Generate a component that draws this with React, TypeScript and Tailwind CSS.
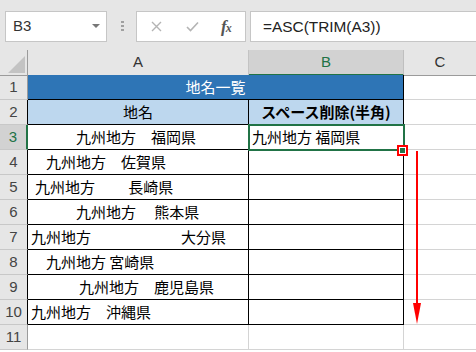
import React from 'react';

const JP = "font-['Noto_Sans_CJK_JP',sans-serif]";
const UI = "font-['Liberation_Sans',Arial,sans-serif]";

const dataRows = [
  { text: '九州地方　福岡県', pad: 'pl-[48px]' },
  { text: '九州地方　佐賀県', pad: 'pl-[18px]' },
  { text: '九州地方　　 長崎県', pad: 'pl-[7px]' },
  { text: '九州地方　 熊本県', pad: 'pl-[48px]' },
  { text: '九州地方　　　　　　大分県', pad: 'pl-[3px]' },
  { text: '九州地方 宮崎県', pad: 'pl-[18px]' },
  { text: '九州地方　鹿児島県', pad: 'pl-[51px]' },
  { text: '九州地方　沖縄県', pad: 'pl-[3px]' },
];

const RowHead: React.FC<{ n: number; edge: string; active?: boolean }> = ({ n, edge, active }) => (
  <div
    className={`h-[25px] flex items-center justify-center border-b border-b-[#c8c8c8] ${edge} ${UI} text-[15px] ${
      active ? 'bg-[#d2d2d2] text-[#217346]' : 'bg-[#e6e6e6] text-[#444]'
    }`}
  >
    {n}
  </div>
);

const Toolbar: React.FC = () => (
  <div className="h-[50px] bg-[#e6e6e6] flex items-start pt-[11px]">
    <div className={`ml-[5px] w-[102px] h-[31px] bg-white border border-[#c6c6c6] flex items-center justify-between pl-[7px] pr-[6px] ${UI} text-[15px] text-[#333]`}>
      <span>B3</span>
      <svg width="8" height="5" viewBox="0 0 8 5">
        <polygon points="0,0 8,0 4,4" fill="#777" />
      </svg>
    </div>
    <div className="ml-[14px] mt-[10px] flex flex-col gap-[2px]">
      <span className="w-[3px] h-[2px] bg-[#a0a0a0]" />
      <span className="w-[3px] h-[2px] bg-[#a0a0a0]" />
      <span className="w-[3px] h-[2px] bg-[#a0a0a0]" />
    </div>
    <div className="ml-[12px] w-[110px] h-[31px] bg-white border border-[#c6c6c6] flex items-center">
      <svg className="ml-[14px]" width="11" height="11" viewBox="0 0 11 11">
        <path d="M1 1 L10 10 M10 1 L1 10" stroke="#b4b4b4" strokeWidth="1.4" />
      </svg>
      <svg className="ml-[24px]" width="13" height="11" viewBox="0 0 13 11">
        <path d="M1 6 L4.5 9.5 L12 1.5" stroke="#b4b4b4" strokeWidth="1.6" fill="none" />
      </svg>
      <span className="ml-[22px] font-['Liberation_Serif',serif] italic font-bold text-[17px] leading-none text-[#555] tracking-[-1px]">
        f<span className="text-[12px]">x</span>
      </span>
    </div>
    <div className={`ml-[4px] flex-1 h-[31px] bg-white border border-r-0 border-[#c6c6c6] flex items-center pl-[12px] ${UI} text-[15.4px] text-[#222]`}>
      =ASC(TRIM(A3))
    </div>
  </div>
);

export default function App() {
  return (
    <div className="w-[476px] h-[352px] bg-white overflow-hidden">
      <Toolbar />
      <div className="relative grid grid-cols-[28px_221px_155px_72px] auto-rows-[25px]">
        {/* column headers */}
        <div className="h-[26px] bg-[#e6e6e6] border-r border-b border-[#9b9b9b] relative">
          <svg className="absolute right-[2px] bottom-[2px]" width="17" height="17" viewBox="0 0 17 17">
            <polygon points="17,0 17,17 0,17" fill="#c3c3c3" />
          </svg>
        </div>
        <div className={`h-[26px] bg-[#e6e6e6] border-r border-r-[#c3c3c3] border-b border-b-[#9b9b9b] flex items-center justify-center ${UI} text-[15px] text-[#333]`}>
          A
        </div>
        <div className={`h-[26px] bg-[#d2d2d2] border-r border-r-[#bfbfbf] border-b-2 border-b-[#217346] flex items-center justify-center ${UI} text-[15px] text-[#217346]`}>
          B
        </div>
        <div className={`h-[26px] bg-[#e6e6e6] border-b border-b-[#9b9b9b] flex items-center justify-center ${UI} text-[15px] text-[#333]`}>
          C
        </div>

        {/* row 1 */}
        <RowHead n={1} edge="border-r border-r-[#9b9b9b]" />
        <div className={`col-span-2 bg-[#2e75b6] border-r border-b border-black flex items-center justify-center ${JP} text-[15px] text-white`}>
          地名一覧
        </div>
        <div className="border-b border-[#d4d4d4]" />

        {/* row 2 */}
        <RowHead n={2} edge="border-r border-r-black" />
        <div className={`bg-[#bdd7ee] border-r border-b border-black flex items-center justify-center ${JP} text-[15px] text-black`}>
          地名
        </div>
        <div className={`bg-[#bdd7ee] border-r border-b border-black flex items-center justify-center ${JP} text-[15px] font-bold text-black`}>
          スペース削除(半角)
        </div>
        <div className="border-b border-[#d4d4d4]" />

        {/* rows 3-10 */}
        {dataRows.map((r, i) => (
          <React.Fragment key={i}>
            <RowHead
              n={i + 3}
              active={i === 0}
              edge={i === 0 ? 'border-r-2 border-r-[#217346]' : 'border-r border-r-black'}
            />
            <div className={`border-r border-b border-black flex items-center whitespace-pre ${r.pad} ${JP} text-[15px] text-black`}>
              {r.text}
            </div>
            <div className={`relative border-r border-b border-black flex items-center whitespace-pre pl-[3px] ${JP} text-[15px] text-black`}>
              {i === 0 && (
                <>
                  九州地方 福岡県
                  <div className="absolute -left-[1px] -top-[1px] w-[157px] h-[27px] border-2 border-[#217346]" />
                  <div className="absolute left-[148px] top-[20px] w-[11px] h-[11px] border-2 border-[#ff0000] z-10 flex items-center justify-center bg-white">
                    <span className="w-[5px] h-[5px] bg-[#217346]" />
                  </div>
                </>
              )}
            </div>
            <div className="border-b border-[#d4d4d4]" />
          </React.Fragment>
        ))}

        {/* row 11 */}
        <RowHead n={11} edge="border-r border-r-[#9b9b9b]" />
        <div className="border-r border-b border-[#d4d4d4]" />
        <div className="border-r border-b border-[#d4d4d4]" />
        <div className="border-b border-[#d4d4d4]" />

        <svg className="absolute left-[410px] top-[100px] z-10" width="14" height="176" viewBox="0 0 14 176">
          <line x1="7" y1="1" x2="7" y2="160" stroke="#ff0000" strokeWidth="2" />
          <polygon points="3,153 11,153 7,174" fill="#ff0000" />
        </svg>
      </div>
    </div>
  );
}
